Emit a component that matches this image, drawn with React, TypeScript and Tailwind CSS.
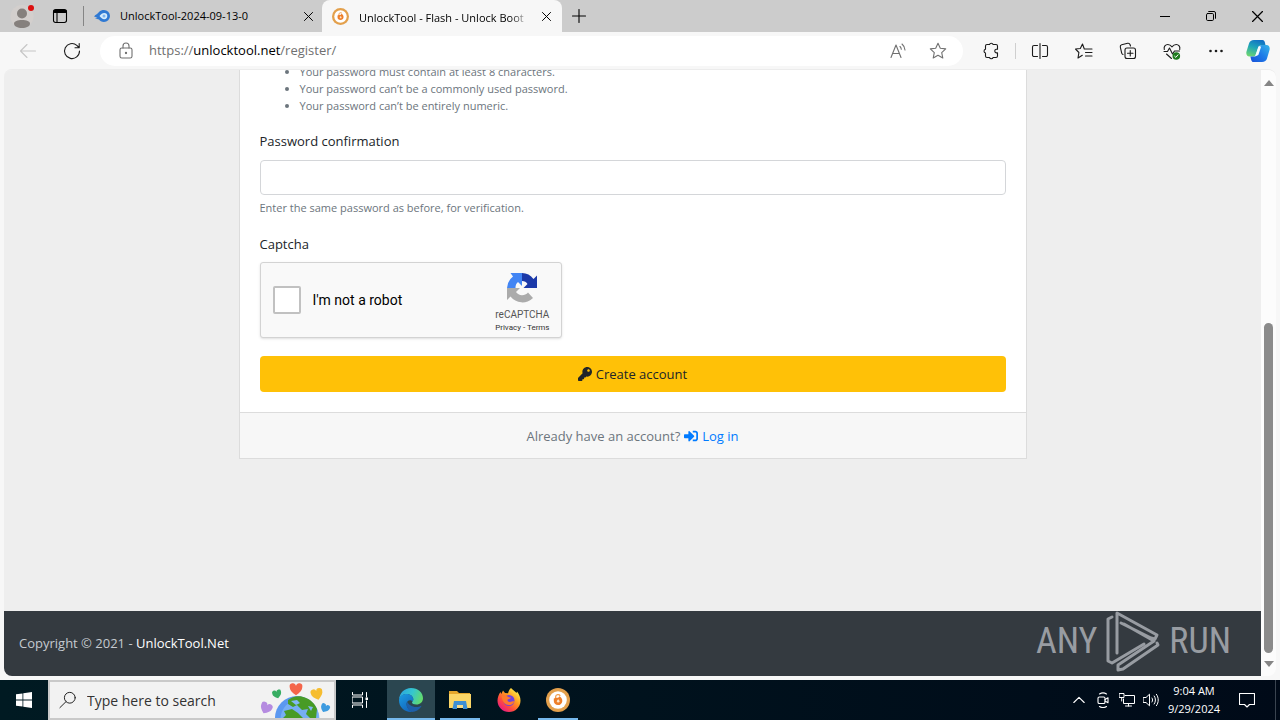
import type { ReactNode } from "react"
import { FaKey, FaSignInAlt } from "react-icons/fa"
import { clsx } from "clsx"

function Glyph({ children, className = "size-5", box = 20 }: { children: ReactNode; className?: string; box?: number }) {
  return (
    <svg
      viewBox={`0 0 ${box} ${box}`}
      className={clsx("shrink-0", className)}
      fill="none"
      stroke="currentColor"
      strokeWidth="1.1"
      strokeLinecap="round"
      strokeLinejoin="round"
      aria-hidden="true"
    >
      {children}
    </svg>
  )
}

function IconButton({ label, className, children }: { label: string; className?: string; children: ReactNode }) {
  return (
    <button type="button" aria-label={label} className={clsx("flex shrink-0 items-center justify-center", className)}>
      {children}
    </button>
  )
}

function CloseGlyph({ className }: { className?: string }) {
  return (
    <Glyph box={10} className={className}>
      <path d="M.5.500l9 9M9.500.500l-9 9" strokeWidth="1.1" />
    </Glyph>
  )
}

function UnlockToolLogo({ className }: { className?: string }) {
  return (
    <svg viewBox="0 0 24 24" className={clsx("shrink-0", className)} aria-hidden="true">
      <circle cx="12" cy="12" r="12" fill="#e3a04c" />
      <circle cx="12" cy="12" r="8.800" fill="#fff" />
      <path d="M9.600 10.500V9a2.500 2.500 0 0 1 4.600-1.200" fill="none" stroke="#f0a050" strokeWidth="1.300" />
      <path d="M7.800 10.500c1.600-.9 3-1 4.400-.7l1.300-1.600c2 1.200 3 2.900 2.800 5-.2 2.400-2 3.900-4.300 3.900-2.600 0-4.200-1.700-4.200-4z" fill="#ee7f2a" />
      <path d="M12.300 11.300c.8.600 1.200 1.300 1.200 2a1.300 1.300 0 0 1-2.600 0c0-.800.500-1.400 1.400-2z" fill="#fde3c4" />
    </svg>
  )
}

function TabStrip() {
  return (
    <header className="flex h-8 shrink-0 bg-[#cccccc] text-black">
      <IconButton label="Profile" className="w-11">
        <svg viewBox="0 0 28 28" className="size-7" aria-hidden="true">
          <circle cx="14" cy="14.500" r="11.500" fill="#d3cfcd" />
          <circle cx="14" cy="11.500" r="5" fill="#85807d" />
          <path d="M6 21.500c0-2.300 3.500-3.500 8-3.500s8 1.200 8 3.500c0 2.800-3.500 4.500-8 4.500s-8-1.700-8-4.500z" fill="#85807d" />
          <circle cx="23" cy="6" r="3" fill="#dc1010" />
        </svg>
      </IconButton>
      <IconButton label="Tab actions" className="w-8">
        <Glyph box={16} className="size-4">
          <rect x="1.500" y="1.500" width="13" height="13" rx="2.200" />
          <path d="M2.500 3.500h11" strokeWidth="3" />
          <path d="M5 4v10" />
        </Glyph>
      </IconButton>
      <div className="ml-[7px] h-5 w-px self-center bg-[#858585]" />
      <div className="flex w-[238px] items-center pl-[10px] pr-[6px]">
        <svg viewBox="0 0 16 16" className="size-4 shrink-0" aria-hidden="true">
          <path d="M0 8.500c2-2.300 3.500-2.500 5-4.500 1.400-1.600 3-2 5-2a6 6 0 0 1 0 12c-2.500 0-4-1-5-2.500-1.400-.4-3-.8-4-1.500l2.500-.6z" fill="#2f79d3" />
          <path d="M5.500 8c1.500-2 3-3 4.700-3a3 3 0 0 1 0 6.200C8.500 11.200 7 10 5.500 8z" fill="#d5ebfc" />
          <circle cx="10" cy="8" r="1.500" fill="#7db4ee" />
        </svg>
        <span className="ml-[10px] flex-1 truncate text-[11px]">UnlockTool-2024-09-13-0</span>
        <IconButton label="Close tab" className="size-4">
          <CloseGlyph className="size-[9px]" />
        </IconButton>
      </div>
      <div className="flex w-[240px] items-center rounded-t-lg bg-[#f7f7f7] pl-[10px] pr-2">
        <UnlockToolLogo className="size-[17px]" />
        <div className="ml-[10px] flex-1">
          <span className="whitespace-nowrap bg-linear-to-r from-black from-90% to-[#b0b0b0] bg-clip-text text-[11px] text-transparent">
            UnlockTool - Flash - Unlock Boot
          </span>
        </div>
        <IconButton label="Close tab" className="ml-2 size-4">
          <CloseGlyph className="size-[9px]" />
        </IconButton>
      </div>
      <IconButton label="New tab" className="w-[34px]">
        <Glyph box={14} className="size-[14px]">
          <path d="M7 .5v13M.5 7h13" />
        </Glyph>
      </IconButton>
      <div className="ml-auto flex">
        <IconButton label="Minimize" className="w-[46px]">
          <Glyph box={10} className="size-[10px]">
            <path d="M0 5.500h10" strokeWidth="1" />
          </Glyph>
        </IconButton>
        <IconButton label="Restore" className="w-[46px]">
          <Glyph box={10} className="size-[10px]">
            <rect x=".5" y="2.500" width="7" height="7" rx="1.200" strokeWidth="1" />
            <path d="M2.700.500H8A1.500 1.500 0 0 1 9.500 2v5.300" strokeWidth="1" />
          </Glyph>
        </IconButton>
        <IconButton label="Close" className="w-[46px]">
          <CloseGlyph className="size-[11px]" />
        </IconButton>
      </div>
    </header>
  )
}

function CopilotLogo() {
  return (
    <svg viewBox="0 0 24 24" className="size-6" aria-hidden="true">
      <defs>
        <linearGradient id="cp-left" x1="0.600" y1="0" x2="0.200" y2="1">
          <stop offset="0" stopColor="#1272c4" />
          <stop offset="0.450" stopColor="#1ea5b8" />
          <stop offset="1" stopColor="#6ed66f" />
        </linearGradient>
        <linearGradient id="cp-right" x1="1" y1="0" x2="0" y2="1">
          <stop offset="0" stopColor="#38b6e8" />
          <stop offset="0.500" stopColor="#1e7be8" />
          <stop offset="1" stopColor="#1750d8" />
        </linearGradient>
      </defs>
      <path d="M8 1h8.500c1.500 0 2 1.200 2.400 2.600L19.600 6.500H15c-2 0-2.700 1-3.200 2.800l-1.700 5.500C9.600 16.500 9 17.500 7.200 17.500H3.500C.8 17.500-.2 15 .5 12.500L3 4.500C3.700 2.200 5.300 1 8 1z" fill="url(#cp-left)" />
      <path d="M16 23H7.500C6 23 5.500 21.800 5.100 20.400l-.7-2.900H8.500c2 0 2.500-1 3-2.800l1.900-6C13.900 7 14.400 6 16.200 6h4.300c2.700 0 3.700 2.500 3 5L21 19.500c-.7 2.300-2.300 3.500-5 3.500z" fill="url(#cp-right)" />
      <path d="M12.800 7.500h2.400l-2.600 7.800c-.3.800-.8 1.200-1.500 1.200H9.300z" fill="#f4fbff" />
    </svg>
  )
}

function Toolbar() {
  return (
    <nav className="flex h-[37px] shrink-0 items-center bg-[#f7f7f7] pl-[6px] pr-[2px] text-[#1b1b1b]">
      <IconButton label="Back" className="w-11 text-[#c6c6c6]">
        <Glyph>
          <path d="M17.500 10h-15M9 3.500L2.500 10 9 16.500" />
        </Glyph>
      </IconButton>
      <IconButton label="Refresh" className="w-11">
        <Glyph>
          <path d="M17.500 10A7.500 7.500 0 1 1 14.800 4.300L17 6.500M17.200 2.500v4.200h-4.200" />
        </Glyph>
      </IconButton>
      <div className="mx-[6px] flex h-[30px] min-w-0 flex-1 items-center rounded-full bg-white pl-4 pr-[5px] text-[#707070]">
        <Glyph>
          <rect x="4" y="7" width="12" height="10" rx="1.800" />
          <path d="M7 7V5a3 3 0 0 1 6 0v2" />
          <circle cx="10" cy="12" r=".6" fill="currentColor" />
        </Glyph>
        <div className="ml-[13px] flex-1 truncate pt-px text-[13px]">
          https://<span className="text-black">unlocktool.net</span>/register/
        </div>
        <IconButton label="Read aloud" className="w-10">
          <Glyph>
            <path d="M3 16.500L8 4l5 12.500M4.700 12.500h6.600M12 5.500c.8.800 1.200 1.700 1.300 2.800M14 3c1.800 1.500 2.800 3.500 3 6" />
          </Glyph>
        </IconButton>
        <IconButton label="Add to favorites" className="w-10">
          <Glyph>
            <path d="M10 2.300l2.300 5 5.400.6-4 3.700 1.100 5.400-4.800-2.700L5.200 17l1.100-5.400-4-3.700 5.400-.6z" />
          </Glyph>
        </IconButton>
      </div>
      <IconButton label="Extensions" className="w-11">
        <Glyph>
          <path d="M6 3.500h2.500a1.900 1.900 0 0 1 3.600 0H15a1.500 1.500 0 0 1 1.500 1.500v3.200h-1.300a1.900 1.900 0 0 0 0 3.700h1.300V15a1.500 1.500 0 0 1-1.500 1.500h-2.900a1.900 1.900 0 0 1-3.600 0H6A1.500 1.500 0 0 1 4.500 15v-3a1.900 1.900 0 0 1 0-3.700V5A1.500 1.500 0 0 1 6 3.500z" />
        </Glyph>
      </IconButton>
      <div className="mx-[2px] h-4 w-px bg-[#cfcfcf]" />
      <IconButton label="Split screen" className="w-11">
        <Glyph>
          <path d="M7.500 4.500H4A1.500 1.500 0 0 0 2.500 6v8A1.500 1.500 0 0 0 4 15.500h3.500M12.500 4.500H16A1.500 1.500 0 0 1 17.500 6v8a1.500 1.500 0 0 1-1.500 1.500h-3.500M10 2.500v15" />
        </Glyph>
      </IconButton>
      <IconButton label="Favorites" className="w-11">
        <Glyph>
          <path d="M12 8h-1.700L8.500 3 6.300 7.500l-4.800.5 3.400 3.500L4 17l4.300-2.700M12 8h6M11.500 11.500H18M11.500 15H18" />
        </Glyph>
      </IconButton>
      <IconButton label="Collections" className="w-11">
        <Glyph>
          <rect x="7" y="7" width="10.500" height="10.500" rx="2" />
          <path d="M12.250 9.500v5.500M9.500 12.250H15M5 13.500a2 2 0 0 1-1.300-1.400L2.300 6A2 2 0 0 1 3.700 3.700l6-1.400A2 2 0 0 1 12 3.500l.5 1.500" />
        </Glyph>
      </IconButton>
      <IconButton label="Browser essentials" className="w-11">
        <Glyph>
          <path d="M2.300 8.500C1.500 5.500 3.500 3.500 5.800 3.500c1.800 0 3.200 1 4.200 2.300 1-1.300 2.400-2.300 4.200-2.300 2.300 0 4.300 2 3.500 5M2 10.500h3.500L7.500 7l3 6 2-3h5M4.500 13l5 4.500" />
          <circle cx="14.300" cy="15" r="3.800" fill="#1d7b1d" stroke="none" />
          <path d="M12.600 15.200l1.200 1.200 2.200-2.600" stroke="#fff" strokeWidth="1" />
        </Glyph>
      </IconButton>
      <IconButton label="Settings and more" className="w-11">
        <Glyph>
          <g fill="currentColor" stroke="none">
            <circle cx="4.500" cy="10" r="1.300" />
            <circle cx="10" cy="10" r="1.300" />
            <circle cx="15.500" cy="10" r="1.300" />
          </g>
        </Glyph>
      </IconButton>
      <IconButton label="Copilot" className="w-10">
        <CopilotLogo />
      </IconButton>
    </nav>
  )
}

function RecaptchaLogo() {
  return (
    <svg viewBox="0 0 32 32" className="size-8" aria-hidden="true">
      <path d="M31 16V3.500L27.500 7A15 15 0 0 0 16 1v8c2.500 0 4.500 1 5.500 3l-4 4z" fill="#1c3aa9" />
      <path d="M16 1H4.500L7 4.500A15 15 0 0 0 1 16h8.500c0-2.500.6-4.600 2.500-6l4 4z" fill="#4285f4" />
      <path d="M1 16v12l3.500-3.500A15 15 0 0 0 27 26l-5-5.500A7.500 7.500 0 0 1 10 20l4-4z" fill="#ababab" />
    </svg>
  )
}

function Recaptcha() {
  return (
    <div className="flex h-[76px] w-[302px] items-center rounded-[3px] border border-[#d3d3d3] bg-[#f9f9f9] pl-3 font-[Roboto,sans-serif] shadow-sm">
      <input
        id="robot"
        type="checkbox"
        className="size-7 shrink-0 appearance-none rounded-xs border-2 border-[#c1c1c1] bg-white"
      />
      <label htmlFor="robot" className="ml-3 flex-1 text-sm text-black">
        I'm not a robot
      </label>
      <div className="mr-[11px] flex flex-col items-center pt-[5px] text-[#555555]">
        <RecaptchaLogo />
        <div className="mt-1 text-[10px] leading-[14px]">reCAPTCHA</div>
        <div className="text-[8px] leading-[11px] text-[#333333]">
          <a href="#privacy">Privacy</a> - <a href="#terms">Terms</a>
        </div>
      </div>
    </div>
  )
}

function RegisterCard() {
  return (
    <form className="mx-auto w-full max-w-[788px] border border-[#dcdcdc] bg-white text-[13px] leading-5 text-[#212529]">
      <div className="px-5 pb-5">
        <ul className="list-disc pl-10 text-[11px] leading-[17px] text-[#6c757d]">
          <li>Your password must contain at least 8 characters.</li>
          <li>Your password can’t be a commonly used password.</li>
          <li>Your password can’t be entirely numeric.</li>
        </ul>
        <label htmlFor="confirm" className="mt-[17px] block">
          Password confirmation
        </label>
        <input
          id="confirm"
          type="password"
          className="mt-[9px] block h-[35px] w-full rounded-[4px] border border-[#d4d6d9] bg-white px-3"
        />
        <p className="mt-1 text-[11px] leading-[17px] text-[#6c757d]">
          Enter the same password as before, for verification.
        </p>
        <div className="mt-[18px] mb-2">Captcha</div>
        <Recaptcha />
        <button
          type="submit"
          className="mt-[18px] flex h-9 w-full items-center justify-center gap-1 rounded-[4px] bg-[#ffc107]"
        >
          <FaKey className="size-[14px]" />
          Create account
        </button>
      </div>
      <div className="flex h-[46px] items-center justify-center gap-1 border-t border-[#dcdcdc] bg-[#f7f7f7] text-[#6c757d]">
        Already have an account?
        <a href="#login" className="flex items-center gap-1 text-[#007bff]">
          <FaSignInAlt className="size-[14px]" />
          Log in
        </a>
      </div>
    </form>
  )
}

function Watermark() {
  return (
    <div className="absolute right-[30px] bottom-1 flex items-center gap-2 font-['Liberation_Sans_Narrow','Roboto_Condensed','Liberation_Sans',sans-serif] text-[36px] leading-none text-[#989ca2]">
      <span>ANY</span>
      <svg
        viewBox="0 0 56 62"
        className="h-[62px] w-14"
        fill="none"
        stroke="currentColor"
        strokeWidth="3"
        strokeLinecap="round"
        strokeLinejoin="round"
        aria-hidden="true"
      >
        <path d="M7 7L3 9v42l4 2 32-19M12 43V3l40 22-2 4-4-1-30-15M52 33l1 2-35 24-5 1v-5l36-24-30-17" />
      </svg>
      <span>RUN</span>
    </div>
  )
}

function Scrollbar() {
  return (
    <div className="flex w-[15px] shrink-0 flex-col items-center bg-[#fcfcfc] text-[#858585]">
      <svg viewBox="0 0 10 6" className="mt-[10px] mb-1 h-[6px] w-[10px] shrink-0" aria-hidden="true">
        <path d="M5 0l5 6H0z" fill="currentColor" />
      </svg>
      <div className="flex-[233]" />
      <div className="w-[9px] flex-[330] rounded-full bg-[#8b8b8b]" />
      <svg viewBox="0 0 10 6" className="mt-2 mb-[9px] h-[6px] w-[10px] shrink-0" aria-hidden="true">
        <path d="M5 6l5-6H0z" fill="currentColor" />
      </svg>
    </div>
  )
}

function Page() {
  return (
    <div className="min-h-0 flex-1 bg-[#f7f7f7] px-1 pb-1">
      <div className="flex h-full overflow-hidden rounded-lg border-t border-[#ececec]">
        <main className="relative flex min-w-0 flex-1 flex-col justify-end overflow-hidden bg-[#eeeeee]">
          <RegisterCard />
          <footer className="mt-[152px] flex h-[65px] shrink-0 items-center bg-[#343a40] px-[15px] text-[13px] text-[#c5cad0]">
            <p>
              Copyright © 2021 -{" "}
              <a href="#home" className="text-white">
                UnlockTool.Net
              </a>
            </p>
          </footer>
          <Watermark />
        </main>
        <Scrollbar />
      </div>
    </div>
  )
}

const hearts = [
  { x: 6, y: 26, fill: "#b58be0", turn: 25, size: 1.3 },
  { x: 17, y: 12, fill: "#38ad62", turn: -15, size: 1 },
  { x: 36, y: 7, fill: "#f4654a", turn: 0, size: 1.4 },
  { x: 57, y: 12, fill: "#f6bd30", turn: -15, size: 1.3 },
  { x: 65, y: 26, fill: "#3d9be0", turn: 25, size: 1 },
]

function EarthDoodle() {
  return (
    <svg viewBox="0 0 74 36" className="h-9 w-[74px] shrink-0 self-end" aria-hidden="true">
      <circle cx="37" cy="36" r="22" fill="#5b98f0" />
      <circle cx="40" cy="37" r="19.500" fill="#82b8f7" opacity=".7" />
      <path d="M28 18c5-4 12-5 18-2 5 2 9 6 11 11l-1 9h-6l-4-4 2-5-6 1-5-5-4 2-5-3zM24 29l8-2 6 4 5 5H23l3-3z" fill="#489b26" />
      <path d="M31 19l6-1 3 3-4 2zM48 24l5 1-2 4z" fill="#82b8f7" />
      {hearts.map((h) => (
        <path
          key={h.fill}
          d="M0 4.500C-3 2.500-4.500.8-4.500-1.300a2.300 2.300 0 0 1 4.500-1 2.300 2.300 0 0 1 4.500 1C4.500.8 3 2.500 0 4.500z"
          fill={h.fill}
          transform={`translate(${h.x} ${h.y}) rotate(${h.turn}) scale(${h.size})`}
        />
      ))}
    </svg>
  )
}

function EdgeLogo() {
  return (
    <svg viewBox="0 0 24 24" className="size-6" aria-hidden="true">
      <defs>
        <linearGradient id="edge-top" x1="0" y1="0.300" x2="1" y2="0.600">
          <stop offset="0" stopColor="#2ba5df" />
          <stop offset="0.500" stopColor="#35c6cf" />
          <stop offset="1" stopColor="#65dc68" />
        </linearGradient>
        <linearGradient id="edge-low" x1="0" y1="0" x2="0.600" y2="1">
          <stop offset="0" stopColor="#1b9de2" />
          <stop offset="1" stopColor="#1467bd" />
        </linearGradient>
      </defs>
      <path d="M0 11.500C.5 5 5.500 0 12 0c7 0 12 4.700 12 10.200 0 3.800-3 6.300-6.600 6.300-2.700 0-4.400-1-4.400-2 0-.7 1.300-1.200 1.300-3.200C14.300 8.500 11.500 6 7.500 6 3.800 6 1 8.500 0 11.500z" fill="url(#edge-top)" />
      <path d="M0 12.500C0 8.500 3.500 6 7.500 6c4 0 6.800 2.500 6.800 5.300 0 1-.3 1.700-.8 2.300-1.200-2-4.500-2-5.600.8-1.200 3.200 1.200 7.600 5.100 9.500C5.500 24.500 0 19 0 12.500z" fill="url(#edge-low)" />
      <path d="M8 13.500c-1.500 3.500.8 8.800 5 10.400 3.800 0 7-2 9.300-5.400.3-.6-.1-.8-.6-.5-1.200.6-2.500 1-4.200 1-5 0-8.200-2.700-9.500-5.500z" fill="#1e5fa8" />
    </svg>
  )
}

function ExplorerLogo() {
  return (
    <svg viewBox="0 0 24 24" className="size-6" aria-hidden="true">
      <path d="M1 3h8l2 2h11v15H1z" fill="#e5a72c" />
      <path d="M1 6h22v14H1z" fill="#fbd667" />
      <path d="M6 13h12l1.500 8H15v-4H9v4H4.500z" fill="#3e8fd4" />
      <path d="M9 17h6v3H9z" fill="#f7dc8b" />
    </svg>
  )
}

function FirefoxLogo() {
  return (
    <svg viewBox="0 0 24 24" className="size-6" aria-hidden="true">
      <defs>
        <linearGradient id="fox" x1="0.900" y1="0.050" x2="0.150" y2="0.950">
          <stop offset="0.050" stopColor="#fff04a" />
          <stop offset="0.400" stopColor="#ff9a1f" />
          <stop offset="0.700" stopColor="#ff4a3f" />
          <stop offset="1" stopColor="#e5158c" />
        </linearGradient>
      </defs>
      <path d="M14 0c1.500 2 4 3 5.500 5l.5-1.500C22 6 23.500 9 23.500 12.700 23.500 19 18.300 24 12 24S.5 19 .5 12.700C.5 9.500 1.800 6 3.500 4l.8 2L6 2.500 8 5l3 .2c.5-2.200 1.500-4 3-5.200z" fill="url(#fox)" />
      <circle cx="12" cy="12.500" r="5.500" fill="#7043df" />
      <path d="M4.500 8c3-1.500 5-.5 6.500.8 1 .8 2.500.7 3 .7-.4 1.300-2 1.300-3.200 2-.8.600-.3 2.500 2.200 2.500 1.700 0 2.800-1 4.300-.6-1 2.600-3 3.600-5.300 3.600-4 0-6.500-3-7.500-9z" fill="#ff7a2c" />
    </svg>
  )
}

const apps = [
  { name: "Microsoft Edge", icon: <EdgeLogo />, button: "bg-[#2b4650]", bar: "w-full" },
  { name: "File Explorer", icon: <ExplorerLogo />, button: "", bar: "w-10" },
  { name: "Firefox", icon: <FirefoxLogo />, button: "", bar: "w-0" },
  { name: "UnlockTool", icon: <UnlockToolLogo className="size-6" />, button: "", bar: "w-10" },
]

function Taskbar() {
  return (
    <footer className="flex h-10 shrink-0 bg-linear-to-r from-[#001a22] to-[#000a18] text-white">
      <IconButton label="Start" className="w-12">
        <svg viewBox="0 0 16 16" className="size-4" fill="currentColor" aria-hidden="true">
          <path d="M0 2.300L6.500 1.400v6.100H0zM7.300 1.300L16 0v7.500H7.300zM0 8.400h6.500v6.200L0 13.700zM7.300 8.400H16V16l-8.700-1.200z" />
        </svg>
      </IconButton>
      <label className="flex w-72 items-center overflow-hidden border-2 border-[#c9c9c9] bg-[#f2f2f2] pl-[9px] text-[#222222]">
        <Glyph className="size-[18px]">
          <circle cx="12" cy="7.500" r="6" />
          <path d="M7.800 11.800L1 18.500" />
        </Glyph>
        <input
          type="search"
          aria-label="Search"
          placeholder="Type here to search"
          className="ml-[10px] min-w-0 flex-1 pt-px text-sm placeholder:text-[#333333]"
        />
        <EarthDoodle />
      </label>
      <IconButton label="Task view" className="w-12">
        <Glyph box={16} className="size-4">
          <path d="M.5.500v2.500h10V.5M.5 5h10v6H.5zM.5 15.500V13h10v2.500M14.500.500V5M14.500 9v6.500" strokeWidth="1" />
          <rect x="13.500" y="5.500" width="2.500" height="2.500" fill="currentColor" stroke="none" />
        </Glyph>
      </IconButton>
      <div className="ml-[3px] flex gap-px">
        {apps.map((app) => (
          <button
            key={app.name}
            type="button"
            aria-label={app.name}
            className={clsx("flex w-12 flex-col items-center justify-between", app.button)}
          >
            <span className="flex flex-1 items-center pt-[2px]">{app.icon}</span>
            <span className={clsx("h-[2px] bg-[#76b9ed]", app.bar)} />
          </button>
        ))}
      </div>
      <div className="ml-auto flex">
        <IconButton label="Hidden icons" className="w-6">
          <Glyph box={12} className="size-3">
            <path d="M.8 8.500L6 3.300l5.200 5.200" />
          </Glyph>
        </IconButton>
        <IconButton label="Meet now" className="w-6">
          <Glyph box={16} className="size-4">
            <rect x="3" y="5" width="7" height="6.500" rx="1.300" />
            <path d="M10 7.500l3-1.700v5l-3-1.700M4.500 2c2-1.300 5-1.300 7 0M4.500 14.500c2 1.200 5 1.200 7 0" />
          </Glyph>
        </IconButton>
        <IconButton label="Network" className="w-6">
          <Glyph box={16} className="size-4">
            <path d="M6 3.500h9.500v8H4.500V7M9.500 11.500V14M6.500 14h6M.5 1.500h4.500v4H.5zM2.700 5.500V9" strokeWidth="1" />
          </Glyph>
        </IconButton>
        <IconButton label="Volume" className="w-6">
          <Glyph box={16} className="size-4">
            <path d="M.5 5.500H3l3.500-3.300v11.600L3 10.500H.500zM9 6c.8 1.200.8 2.800 0 4M11.200 4c1.700 2.400 1.700 5.600 0 8M13.400 2.300c2.500 3.400 2.500 8 0 11.400" strokeWidth="1" />
          </Glyph>
        </IconButton>
        <div className="flex w-[62px] flex-col items-center justify-center text-[11px] leading-[18px]">
          <time>9:04 AM</time>
          <time>9/29/2024</time>
        </div>
        <IconButton label="Notifications" className="w-11">
          <Glyph box={16} className="size-4">
            <path d="M.5 1.500h15v11h-5L8 15l-2.500-2.500h-5z" />
          </Glyph>
        </IconButton>
        <div className="ml-[6px] mr-1 w-px bg-[#3a4450]" />
      </div>
    </footer>
  )
}

export default function App() {
  return (
    <div className="flex h-screen flex-col overflow-hidden font-['Open_Sans','Noto_Sans',sans-serif]">
      <TabStrip />
      <Toolbar />
      <Page />
      <Taskbar />
    </div>
  )
}
